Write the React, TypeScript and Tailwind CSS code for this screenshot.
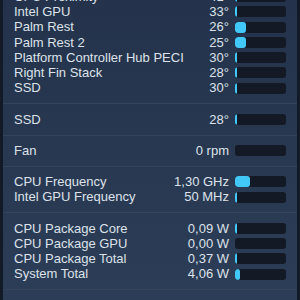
type Row = { label: string; value: string; fill: number };

const GROUPS: Row[][] = [
  [
    { label: "CPU Proximity", value: "41°", fill: 2 },
    { label: "Intel GPU", value: "33°", fill: 2 },
    { label: "Palm Rest", value: "26°", fill: 11 },
    { label: "Palm Rest 2", value: "25°", fill: 11 },
    { label: "Platform Controller Hub PECI", value: "30°", fill: 2 },
    { label: "Right Fin Stack", value: "28°", fill: 2 },
    { label: "SSD", value: "30°", fill: 2 },
  ],
  [{ label: "SSD", value: "28°", fill: 2 }],
  [{ label: "Fan", value: "0 rpm", fill: 0 }],
  [
    { label: "CPU Frequency", value: "1,30 GHz", fill: 15 },
    { label: "Intel GPU Frequency", value: "50 MHz", fill: 2 },
  ],
  [
    { label: "CPU Package Core", value: "0,09 W", fill: 2 },
    { label: "CPU Package GPU", value: "0,00 W", fill: 0 },
    { label: "CPU Package Total", value: "0,37 W", fill: 2 },
    { label: "System Total", value: "4,06 W", fill: 5 },
  ],
  [{ label: "CPU High Side", value: "4,10 W", fill: 13 }],
];

function SensorRow({ row }: { row: Row }) {
  return (
    <div className="flex h-[15.25px] items-center pl-[11px] pr-[11px]">
      <span className="flex-1 truncate">{row.label}</span>
      <span className="text-right">{row.value}</span>
      <div className="ml-[6px] h-[11px] w-[51px] shrink-0 overflow-hidden rounded-[3px] bg-[#141a25]">
        {row.fill > 0 && (
          <div className="h-full rounded-[3px] bg-[#41c8f8]" style={{ width: row.fill }} />
        )}
      </div>
    </div>
  );
}

export default function App() {
  return (
    <div className="flex h-[300px] w-[300px] overflow-hidden bg-[#131a27]">
      <div
        className="ml-[3px] w-[294px] bg-gradient-to-b from-[#24334b] to-[#2c3d57] text-[13px] text-[#dde2ea]"
        style={{ fontFamily: '"Liberation Sans", Arial, sans-serif' }}
      >
        <div className="-mt-[11px]">
          {GROUPS.map((group, gi) => (
            <div
              key={gi}
              className={`${gi === 0 ? "pb-[7.5px]" : "py-[7.5px]"} ${
                gi > 0 ? "border-t border-[#36445a]" : ""
              }`}
            >
              {group.map((row, ri) => (
                <SensorRow key={ri} row={row} />
              ))}
            </div>
          ))}
        </div>
      </div>
    </div>
  );
}
